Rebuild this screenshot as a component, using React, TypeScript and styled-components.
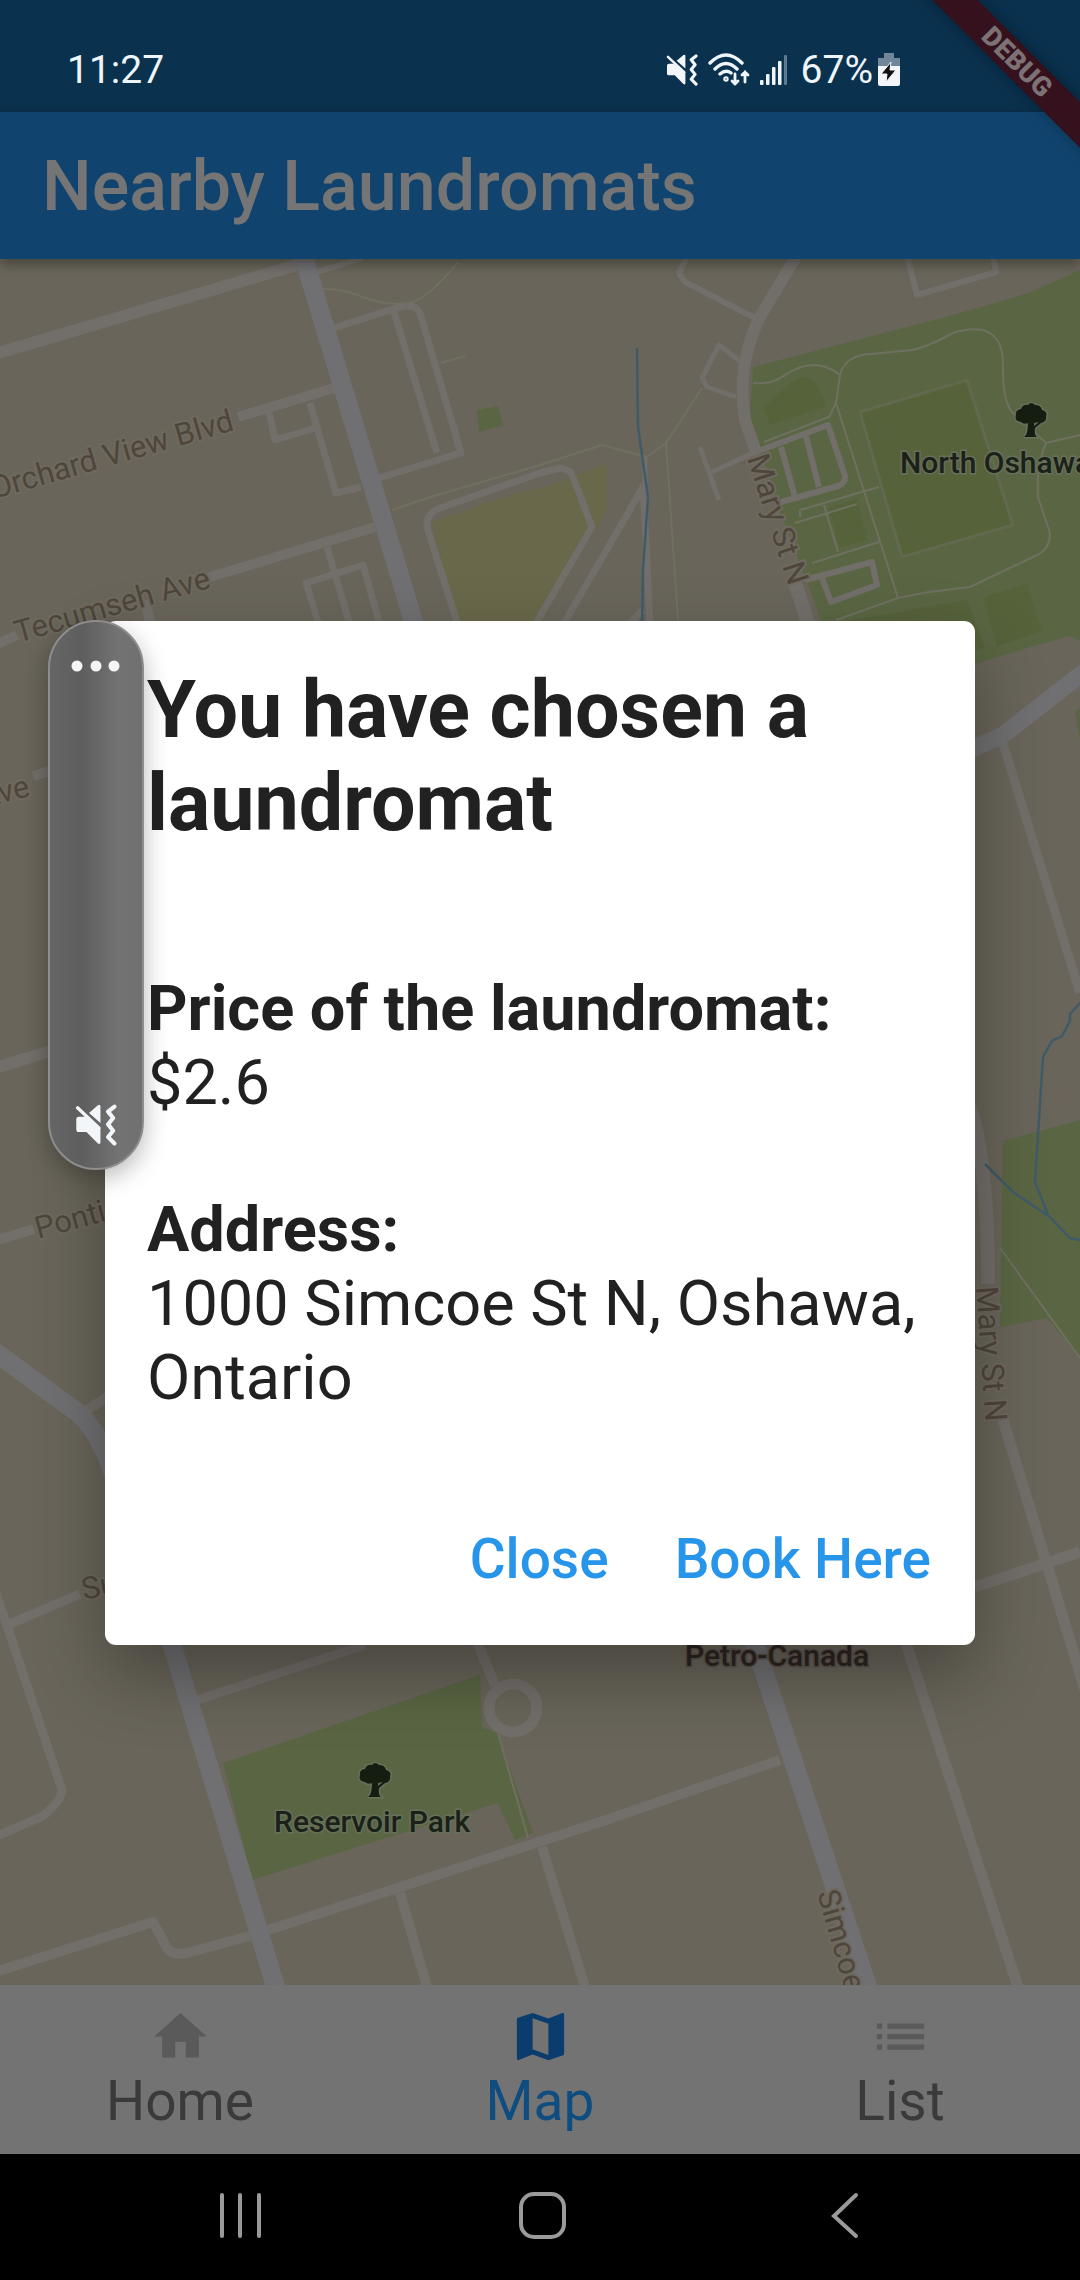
import React from "react";
import styled, { createGlobalStyle } from "styled-components";

const GlobalStyle = createGlobalStyle`
  * { box-sizing: border-box; }
  body { margin: 0; background: #000; font-family: Roboto, "Liberation Sans", sans-serif; }
  button { font: inherit; border: 0; background: none; padding: 0; cursor: pointer; }
  svg { display: block; }
`;

const Phone = styled.div`
  display: flex;
  flex-direction: column;
  min-height: 100vh;
  position: relative;
  overflow: hidden;
`;

const StatusBar = styled.header`
  display: flex;
  justify-content: space-between;
  align-items: center;
  height: 112px;
  padding: 28px 180px 0 67px;
  background: #0a314e;
  color: #eef5fb;
  font-size: 39px;
  line-height: 48px;
`;

const StatusIcons = styled.div`
  display: flex;
  align-items: center;
  gap: 10px;
`;

const Battery = styled.span`
  display: flex;
  align-items: center;
  gap: 5px;
  margin-left: 4px;
`;

const DebugBanner = styled.div`
  position: absolute;
  top: 46px;
  right: -82px;
  width: 290px;
  height: 32px;
  transform: rotate(45deg);
  background: #34111c;
  box-shadow: 0 0 16px rgba(0, 0, 0, 0.3);
  color: #7c7275;
  font-size: 27px;
  font-weight: 900;
  line-height: 32px;
  text-align: center;
  z-index: 4;
`;

const Body = styled.div`
  display: flex;
  flex-direction: column;
  flex: 1;
  position: relative;
`;

const AppBar = styled.div`
  display: flex;
  align-items: center;
  height: 147px;
  padding: 0 42px;
  background: #10446f;
  box-shadow: 0 5px 12px rgba(0, 0, 0, 0.35);
  position: relative;
  z-index: 1;
`;

const AppTitle = styled.h1`
  margin: 0;
  color: #757575;
  font-size: 70px;
  line-height: 80px;
  font-weight: 500;
`;

const MapArea = styled.main`
  flex: 1;
  min-height: 0;
  background: #69655a;
  position: relative;
  overflow: hidden;
  svg { width: 100%; height: 100%; }
`;

const BottomNav = styled.nav`
  display: flex;
  height: 169px;
  background: #737373;
`;

const Tab = styled.button<{ $active?: boolean }>`
  display: flex;
  flex: 1;
  flex-direction: column;
  align-items: center;
  padding-top: 20px;
  color: ${(p) => (p.$active ? "#0f4c80" : "#3a3a3a")};
  && { font-size: 55px; line-height: 66px; }
  svg { width: 63px; height: 63px; fill: ${(p) => (p.$active ? "#0b3c6e" : "#5a5a5a")}; }
`;

const SystemNav = styled.nav`
  display: flex;
  justify-content: space-between;
  align-items: center;
  height: 126px;
  padding: 0 200px 4px 202px;
  background: #000;
`;

const SystemButton = styled.button`
  display: flex;
  justify-content: center;
  width: 76px;
  svg { width: 52px; height: 52px; fill: none; stroke: #9a9a9a; stroke-width: 4; }
`;

const Overlay = styled.div`
  position: absolute;
  inset: 0;
  display: flex;
  align-items: center;
  padding: 0 105px;
  z-index: 2;
`;

const Dialog = styled.section`
  flex: 1;
  padding: 43px 42px 49px;
  border-radius: 11px;
  background: #fff;
  box-shadow: 0 30px 70px rgba(0, 0, 0, 0.32);
  color: #212121;
`;

const DialogTitle = styled.h2`
  margin: 0 0 122px;
  font-size: 79px;
  line-height: 93px;
  font-weight: 700;
`;

const Details = styled.dl`
  margin: 0;
  font-size: 63px;
  line-height: 74px;
`;

const Term = styled.dt`
  font-weight: 700;
`;

const Description = styled.dd`
  margin: 0 0 73px;
`;

const Actions = styled.div`
  display: flex;
  justify-content: flex-end;
  gap: 66px;
  padding: 34px 2px 0;
`;

const ActionButton = styled.button`
  && { color: #2695ea; font-size: 55px; line-height: 74px; font-weight: 500; }
`;

const VolumePanel = styled.aside`
  position: absolute;
  top: 620px;
  left: 48px;
  display: flex;
  flex-direction: column;
  align-items: center;
  justify-content: space-between;
  width: 96px;
  height: 550px;
  padding: 38px 0 22px;
  border: 2px solid #8d8d8d;
  border-radius: 48px;
  background: linear-gradient(90deg, #656565, #5e5e5e 35%, #737373 75%, #707070);
  box-shadow: 0 8px 24px rgba(0, 0, 0, 0.28);
  z-index: 3;
`;

const P = ({ d, w }: { d: string; w: number }) => <path d={d} strokeWidth={w} />;

const MuteVibrate = ({ size }: { size: number }) => (
  <svg width={size} height={size} viewBox="0 0 33 33" aria-hidden="true">
    <path d="M1 12 Q1 10 3 10 H8 L20 20 V30 Q20 32 18 31 L9 22 H3 Q1 22 1 20Z M20 2 Q20 0 18 1 L11 7 L20 15Z" fill="#f3f6f9" />
    <path d="M2 3 L19 19" stroke="#f3f6f9" strokeWidth="2.6" strokeLinecap="round" />
    <path d="M31 2 L26 6 L30 11 L26 16 L30 21 L26 26 L31 31" fill="none" stroke="#f3f6f9" strokeWidth="3.2" strokeLinecap="round" strokeLinejoin="round" />
  </svg>
);

const Tree = ({ x, y }: { x: number; y: number }) => (
  <g transform={`translate(${x} ${y})`} fill="#151c10" stroke="#66705a" strokeWidth="3" paintOrder="stroke">
    <path d="M-7 17 Q-3 15 -3 3 Q-7 5 -10 2 Q-17 1 -15 -5 Q-16 -10 -10 -11 Q-8 -16 -3 -15 Q0 -19 4 -15 Q10 -15 11 -10 Q17 -8 15 -4 Q16 2 10 3 L4 8 Q3 15 6 17 Z" />
    <path d="M3 3 L8 2 L3 6 Z" fill="#66705a" stroke="none" />
  </g>
);

const StreetMap = () => (
  <svg viewBox="0 259 1080 1726" preserveAspectRatio="xMidYMid slice" role="img" aria-label="Map">
    <g fill="#5a6643">
      <path d="M1080 270 L1029 293 L953 315 L753 367 L750 417 L760 447 L778 507 L815 603 L845 700 L975 664 L1027 648 L1070 636 L1080 641Z" />
      <path d="M477 410 L498 406 L503 425 L479 432Z" />
      <path d="M1003 1141 L1080 1120 V1358 L1047 1318 L1000 1327Z" />
      <path d="M223 1763 L480 1675 L482 1727 L497 1733 L533 1833 L515 1840 L498 1803 L252 1880Z" />
      <path d="M1075 712 L1080 708 V740Z" />
    </g>
    <g fill="#56623a">
      <path d="M764 407 L791 382 Q805 372 815 382 L826 403 L822 408 L770 425Z" />
      <path d="M860 412 L967 380 L1013 525 L902 557Z" stroke="#61694f" strokeWidth="3" />
      <path d="M829 508 L857 498 L867 540 L840 547Z" />
      <path d="M983 598 L1027 583 L1042 631 L997 646Z" />
      <path d="M840 622 L967 600 L985 648 L900 670Z" />
    </g>
    <path d="M432 522 L520 492 L545 487 L607 463 V510 L585 545 L540 625 H456Z" fill="#69684a" />
    <g fill="none" stroke="#6f7060">
      <P w={2} d="M322 289 Q344 288 365 298 Q390 306 410 303 Q430 297 458 262 M441 363 L465 356" />
      <P w={2} d="M392 510 L427 498 L540 465 L602 445 L647 457 L666 443 L702 388 M666 443 L678 620" />
      <P w={2} d="M753 383 Q772 385 785 375 Q815 355 840 375 Q845 355 871 354 L912 350 Q925 348 953 333 Q1003 318 1003 365 Q1002 405 1015 415 L1046 443 Q1036 465 1038 497 L1050 533 Q1050 550 1035 556 L970 587 L929 592 L898 598 L836 620 M1046 443 L1080 435" />
      <P w={2} d="M840 375 L836 403 L898 598 M836 403 L829 417 L764 442 M800 517 V510 L879 487 M795 523 L857 504 M824 505 L838 552 M812 563 L879 542" />
      <P w={2} d="M1000 1248 L1080 1358 M498 1733 L528 1838" />
    </g>
    <g fill="none" stroke="#726e6a" strokeLinejoin="round">
      <P w={12} d="M-5 354 L300 264 M-5 1068 L60 1048" />
      <P w={6} d="M317 272 L362 258 M688 255 L679 273 L685 282 L755 318 M907 255 L917 295 L996 272 L993 255" />
      <P w={10} d="M238 417 L334 388 M207 578 L375 527 M-5 645 L17 635 M33 776 L60 768 M145 600 L152 630 M-5 1241 L34 1229 M87 1410 L110 1395" />
      <P w={7} d="M269 412 L275 440 L315 428 M310 403 L336 493 L361 487 M334 328 L396 308 Q415 302 420 313 L461 453 L379 478 M394 312 L437 453" />
      <P w={7} d="M458 625 L427 527 Q426 513 440 508 L540 473 L561 468 L571 472 L592 527 L535 625 M327 547 L350 625 M319 625 L306 583 L363 565 L380 625" />
      <P w={7} d="M643 483 L650 625 M643 487 L563 625 M628 625 L643 610" />
      <P w={5} d="M645 457 V483 M741 362 L719 345 L702 378 L707 387 L736 397 M700 447 L719 500 M712 472 L753 453" />
      <P w={6} d="M753 453 L828 425 L845 476 Q846 483 838 486 L781 502 M781 447 L795 497 M805 433 L819 487 M805 580 L872 562 L877 585 L831 602 L822 578" />
      <P w={12} d="M797 255 L760 317 Q736 365 745 420 L756 452" />
      <P w={14} d="M795 583 L807 620 L975 1125 Q988 1180 988 1284" />
      <P w={9} d="M1002 740 L1080 993 M-5 1590 L62 1790 Q62 1800 43 1816 L-5 1837 M10 1624 L80 1594 M197 1700 L365 1645" />
      <P w={10} d="M-5 1972 L153 1922 L167 1948 Q172 1956 187 1953 L253 1935 L600 1822 L780 1760 M400 1893 L428 1990 M542 1847 L586 1990 M476 1640 L495 1685" />
      <P w={11} d="M905 1640 L1019 1990 M975 1587 L1080 1552 M1003 1420 L1085 1690" />
      <circle cx="513" cy="1708" r="24" strokeWidth="11" />
    </g>
    <g fill="none" stroke="#707072">
      <P w={19} d="M300 245 L413 620 L760 1660 L872 2000" />
      <P w={17} d="M970 750 L1003 735 L1085 671" />
      <P w={19} d="M-5 1352 L77 1412 Q98 1430 112 1470 L172 1645 L279 1998" />
    </g>
    <g fill="none" stroke="#405b68" strokeWidth="2.5">
      <path d="M637 348 L638 427 L648 497 L643 570 L642 625" />
      <path d="M1080 1003 L1070 1014 V1021 L1062 1036 L1052 1041 L1043 1057 L1035 1182 L1048 1215 L1070 1238 L1080 1240 M985 1164 L1013 1192 L1047 1215" />
    </g>
    <g fill="#4f463b" stroke="#6e695f" strokeWidth="4" paintOrder="stroke" fontFamily="Roboto, sans-serif" fontSize="31">
      <text transform="translate(-6 499) rotate(-16)">Orchard View Blvd</text>
      <text transform="translate(18 643) rotate(-16)">Tecumseh Ave</text>
      <text transform="translate(747 458) rotate(72)">Mary St N</text>
      <text transform="translate(976 1287) rotate(86)">Mary St N</text>
      <text transform="translate(817 1893) rotate(74)">Simcoe</text>
      <text transform="translate(-18 808) rotate(-14)">Ave</text>
      <text transform="translate(38 1239) rotate(-15)">Pontiac</text>
      <text transform="translate(84 1600) rotate(-12)">Su</text>
    </g>
    <g fontFamily="Roboto, sans-serif" fontSize="30" fontWeight="500" strokeWidth="3" paintOrder="stroke">
      <text x="900" y="473" fill="#1b2118" stroke="#66705a">North Oshawa</text>
      <text x="274" y="1832" fill="#1b2118" stroke="#66705a">Reservoir Park</text>
      <text x="685" y="1666" fill="#2e2420" stroke="#5c564e">Petro-Canada</text>
    </g>
    <Tree x={1031} y={420} />
    <Tree x={375} y={1780} />
  </svg>
);

export default function App() {
  return (
    <Phone>
      <GlobalStyle />
      <StatusBar>
        <time>11:27</time>
        <StatusIcons>
          <MuteVibrate size={32} />
          <svg width="42" height="34" viewBox="0 0 42 34" fill="none" stroke="#eef5fb" strokeWidth="3.4" strokeLinecap="round" aria-hidden="true">
            <path d="M2 10 Q18 -6 34 10 M7 16 Q18 5 29 16 M12 21 Q18 16 23 20" />
            <circle cx="18" cy="26" r="1" />
            <path d="M27 21 V31 M24 28 L27 31 L30 28 M37 29 V19 M34 22 L37 19 L40 22" strokeWidth="2.8" />
          </svg>
          <svg width="27" height="32" viewBox="0 0 27 32" fill="#eef5fb" aria-hidden="true">
            <rect x="0" y="26" width="3.5" height="5" rx="1" />
            <rect x="6" y="20" width="3.5" height="11" rx="1" />
            <rect x="12" y="13" width="3.5" height="18" rx="1" />
            <rect x="18" y="7" width="3.5" height="24" rx="1" />
            <rect x="24" y="1" width="3" height="30" rx="1" fill="#5d7a90" />
          </svg>
          <Battery>
            67%
            <svg width="22" height="34" viewBox="0 0 22 34" aria-hidden="true">
              <path d="M6 0 H16 V5 H22 V14 H0 V5 H6Z" fill="#6f8799" />
              <path d="M0 13 H22 V31 Q22 33 20 33 H2 Q0 33 0 31Z" fill="#f3f6f9" />
              <path d="M13 9 L3 21 H9 L8 29 L18 17 H12Z" fill="#111" stroke="#f3f6f9" strokeWidth="1" />
            </svg>
          </Battery>
        </StatusIcons>
      </StatusBar>
      <Body>
        <AppBar>
          <AppTitle>Nearby Laundromats</AppTitle>
        </AppBar>
        <MapArea>
          <StreetMap />
        </MapArea>
        <BottomNav>
          <Tab>
            <svg viewBox="0 0 24 24"><path d="M10 20v-6h4v6h5v-8h3L12 3 2 12h3v8z" /></svg>
            Home
          </Tab>
          <Tab $active>
            <svg viewBox="0 0 24 24"><path d="M20.5 3l-.16.03L15 5.1 9 3 3.36 4.9c-.21.07-.36.25-.36.48V20.5c0 .28.22.5.5.5l.16-.03L9 18.9l6 2.1 5.64-1.9c.21-.07.36-.25.36-.48V3.500c0-.28-.22-.5-.5-.5zM15 19l-6-2.110V5l6 2.110V19z" /></svg>
            Map
          </Tab>
          <Tab>
            <svg viewBox="0 0 24 24"><path d="M3 13h2v-2H3v2zm0 4h2v-2H3v2zm0-8h2V7H3v2zm4 4h14v-2H7v2zm0 4h14v-2H7v2zM7 7v2h14V7H7z" /></svg>
            List
          </Tab>
        </BottomNav>
        <Overlay>
          <Dialog role="dialog" aria-labelledby="dialog-title">
            <DialogTitle id="dialog-title">You have chosen a laundromat</DialogTitle>
            <Details>
              <Term>Price of the laundromat:</Term>
              <Description>$2.6</Description>
              <Term>Address:</Term>
              <Description>1000 Simcoe St N, Oshawa, Ontario</Description>
            </Details>
            <Actions>
              <ActionButton>Close</ActionButton>
              <ActionButton>Book Here</ActionButton>
            </Actions>
          </Dialog>
        </Overlay>
      </Body>
      <SystemNav>
        <SystemButton aria-label="Recent apps">
          <svg viewBox="0 0 52 52"><path d="M8 6V47M26 6V47M45 6V47" strokeLinecap="round" /></svg>
        </SystemButton>
        <SystemButton aria-label="Home screen">
          <svg viewBox="0 0 52 52"><rect x="6" y="5" width="43" height="43" rx="13" /></svg>
        </SystemButton>
        <SystemButton aria-label="Back">
          <svg viewBox="0 0 52 52"><path d="M40 6L18 27L40 47" strokeLinecap="round" /></svg>
        </SystemButton>
      </SystemNav>
      <VolumePanel aria-label="Volume">
        <svg width="50" height="12" viewBox="0 0 50 12" fill="#f5f5f5">
          <circle cx="6" cy="6" r="5.5" />
          <circle cx="25" cy="6" r="5.5" />
          <circle cx="43" cy="6" r="5.5" />
        </svg>
        <MuteVibrate size={42} />
      </VolumePanel>
      <DebugBanner>DEBUG</DebugBanner>
    </Phone>
  );
}
